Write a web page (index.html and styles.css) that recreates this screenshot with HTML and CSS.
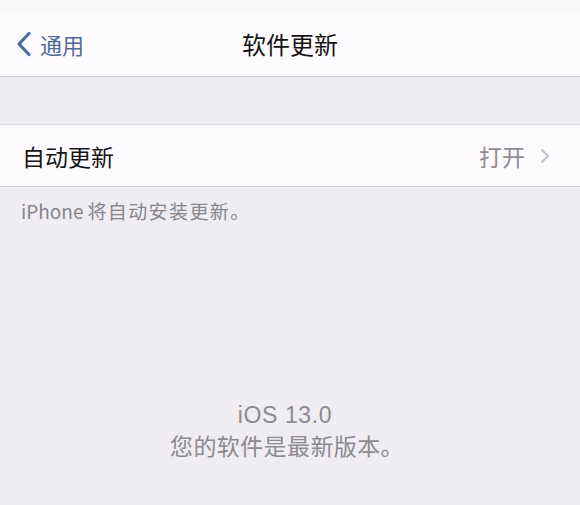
FILE: index.html
```html
<!DOCTYPE html>
<html lang="zh-CN">

<head>
    <meta charset="UTF-8">
    <meta name="viewport" content="width=device-width, initial-scale=1.0">
    <title>软件更新</title>
    <link rel="stylesheet" href="styles.css">
</head>

<body>
    <div class="status"></div>
    <div class="nav">
        <div class="back">
            <svg class="back-icon" width="16" height="28" viewBox="0 0 16 28">
                <path d="M13 3.5 L3 14 L13 24.5" fill="none" stroke="#4d6c9e" stroke-width="3.2" stroke-linecap="round" stroke-linejoin="round"/>
            </svg>
            <span>通用</span>
        </div>
        <div class="title">软件更新</div>
    </div>
    <div class="group">
        <div class="row">
            <span class="label">自动更新</span>
            <span class="value">打开</span>
            <svg class="chevron" width="10" height="16" viewBox="0 0 10 16">
                <path d="M2 2 L8 8 L2 14" fill="none" stroke="#c4c3c8" stroke-width="2" stroke-linecap="round" stroke-linejoin="round"/>
            </svg>
        </div>
    </div>
    <div class="note"><span class="latin">iPhone</span>将自动安装更新。</div>
    <div class="version">
        <div class="ios">iOS 13.0</div>
        <div class="latest">您的软件是最新版本。</div>
    </div>
</body>

</html>
```

FILE: styles.css
```css
html,
body {
    margin: 0;
    padding: 0;
}

body {
    width: 580px;
    height: 505px;
    overflow: hidden;
    background-color: #efedf2;
    font-family: "Noto Sans CJK SC", "Liberation Sans", sans-serif;
    display: flex;
    flex-direction: column;
}

.status {
    height: 15px;
    background-color: #f8f6f9;
}

.nav {
    position: relative;
    height: 61px;
    background-color: #fdfbfe;
    border-bottom: 1px solid #c9c7cc;
    display: flex;
    align-items: center;
}

.back {
    display: flex;
    align-items: center;
    padding-left: 16px;
    color: #4f6c98;
    font-size: 22px;
    gap: 8px;
    margin-top: -4px;
}

.title {
    position: absolute;
    left: 0;
    right: 0;
    top: 0;
    bottom: 0;
    display: flex;
    align-items: center;
    justify-content: center;
    font-size: 24px;
    color: #141414;
    margin-top: -5px;
    pointer-events: none;
}

.group {
    margin-top: 47px;
    background-color: #fdfbfe;
    border-top: 1px solid #dcdadf;
    border-bottom: 1px solid #d2d0d5;
}

.row {
    height: 61px;
    display: flex;
    align-items: center;
    padding: 0 30px 0 22px;
}

.label {
    flex: 1;
    font-size: 23px;
    color: #151515;
}

.value {
    font-size: 23px;
    color: #8d8c91;
    margin-right: 15px;
}

.note {
    padding: 10px 0 0 21px;
    font-size: 19px;
    letter-spacing: 1.4px;
    color: #86858a;
}

.note .latin {
    letter-spacing: 0;
    margin-right: 4px;
}

.version {
    margin-top: auto;
    margin-bottom: 44px;
    text-align: center;
    color: #8b8a8f;
}

.ios {
    font-family: "Liberation Sans", sans-serif;
    font-size: 23px;
    line-height: 28px;
    letter-spacing: 0.6px;
    margin-left: -10px;
}

.latest {
    font-size: 23px;
    line-height: 32px;
    letter-spacing: 0.4px;
    margin-left: -6px;
}
```
